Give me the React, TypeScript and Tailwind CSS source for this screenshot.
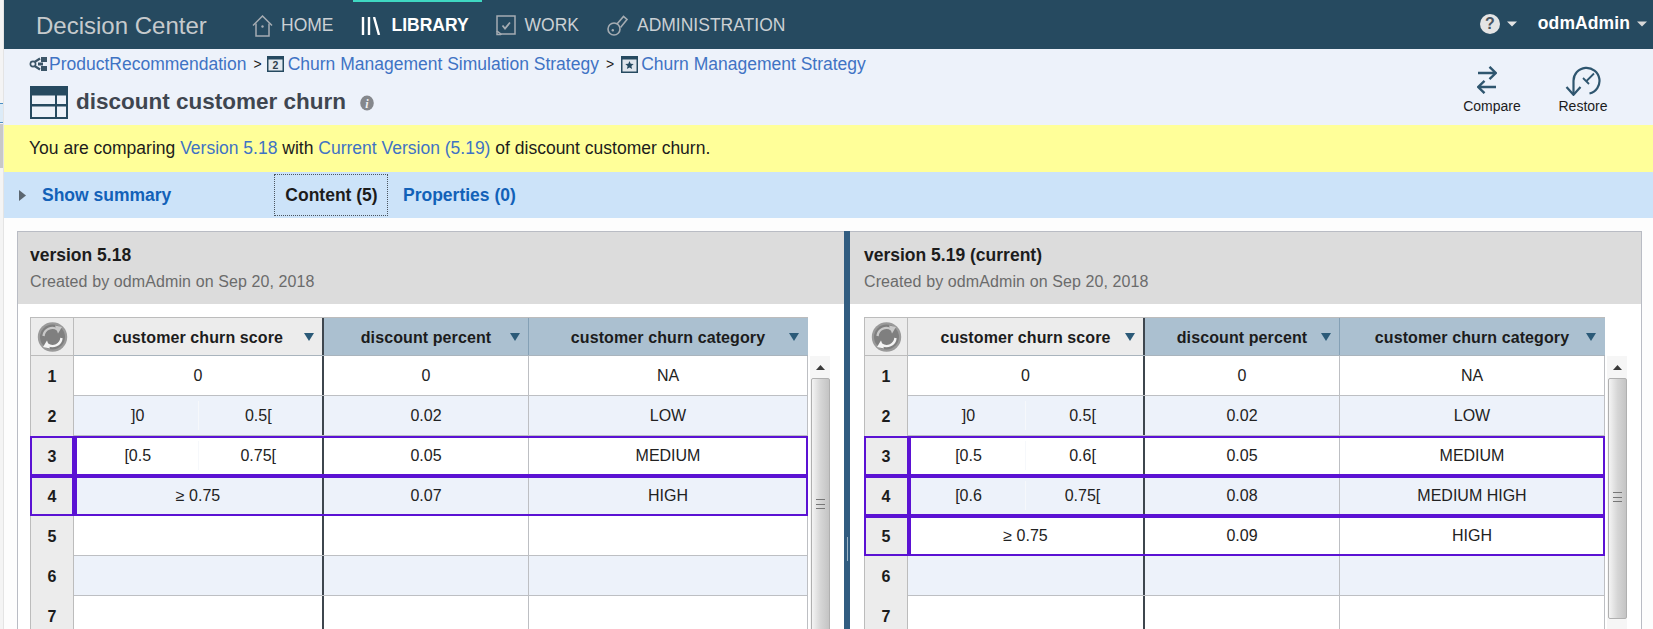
import React from "react";

const FONT = { fontFamily: '"Liberation Sans", Arial, sans-serif' };

function Caret({ className = "" }: { className?: string }) {
  return (
    <svg width="10" height="6" viewBox="0 0 10 6" className={className}>
      <path d="M0 0.5h10L5 5.5z" fill="currentColor" />
    </svg>
  );
}
function FilterCaret() {
  return (
    <svg width="10" height="8" viewBox="0 0 10 8" className="absolute right-[8px] top-[15px]">
      <path d="M0 0h10L5 8z" fill="#2b5a78" />
    </svg>
  );
}

function HomeIcon() {
  return (
    <svg width="21" height="22" viewBox="0 0 21 22" fill="none" stroke="#a5acb2" strokeWidth="1.5">
      <path d="M1 10.500L10.500 1 20 10.500" />
      <path d="M4 8.500V21h13V8.500" />
      <circle cx="10.500" cy="11.500" r="1.200" fill="#a5acb2" stroke="none" />
    </svg>
  );
}
function LibraryIcon() {
  return (
    <svg width="20" height="18" viewBox="0 0 20 18" fill="none" stroke="#ffffff" strokeWidth="2.400">
      <path d="M2 0v18M8 0v18M13 0l5 18" />
    </svg>
  );
}
function WorkIcon() {
  return (
    <svg width="20" height="21" viewBox="0 0 20 21" fill="none" stroke="#a5acb2" strokeWidth="1.500">
      <path d="M1 1h18v18H5l-4-3z" />
      <path d="M1 16v3.500h4V20" />
      <path d="M6.500 10.500l2.500 3 5-6" strokeWidth="1.800" />
    </svg>
  );
}
function KeyIcon() {
  return (
    <svg width="21" height="21" viewBox="0 0 21 21" fill="none" stroke="#a5acb2" strokeWidth="1.600">
      <circle cx="7" cy="14" r="6" />
      <circle cx="5.800" cy="15.200" r="1.200" fill="#a5acb2" stroke="none" />
      <path d="M10 9L16.500 1.500 20 4.500 13.500 12.500" />
    </svg>
  );
}

function ProjectIcon() {
  return (
    <svg width="19" height="15" viewBox="0 0 19 15">
      <path d="M11 1.500L2.500 7l8.500 5.500" fill="none" stroke="#3c5668" strokeWidth="2.200" />
      <circle cx="4" cy="7" r="2.600" fill="#edf2fa" stroke="#3c5668" strokeWidth="1.600" />
      <path d="M12 0h6v5h-6zM12 9h6v5h-6z" fill="#3c5668" />
      <path d="M9 5.500h5v3H9z" fill="#3c5668" />
    </svg>
  );
}
function CalendarIcon({ label }: { label: string }) {
  return (
    <svg width="17" height="16" viewBox="0 0 17 16" className="shrink-0">
      <rect x="0" y="0" width="17" height="16" fill="#264a60" />
      <rect x="1.500" y="3.500" width="14" height="11" fill="#e4e9ef" />
      <text x="8.500" y="13" fontSize="10.500" fontWeight="700" textAnchor="middle" fill="#2f3f4c" fontFamily="Liberation Sans">
        {label}
      </text>
    </svg>
  );
}
function StarIcon() {
  return (
    <svg width="17" height="17" viewBox="0 0 17 17" className="shrink-0">
      <rect x="0" y="0" width="17" height="17" fill="#264a60" />
      <rect x="1.500" y="3.500" width="14" height="12" fill="#dfe5ec" />
      <path d="M8.500 5l1.200 2.800 3 .2-2.300 2 .7 3-2.600-1.600-2.600 1.600.7-3-2.300-2 3-.2z" fill="#264a60" />
    </svg>
  );
}
function TableIcon() {
  return (
    <svg width="38" height="33" viewBox="0 0 38 33" className="shrink-0">
      <rect width="38" height="33" fill="#264a60" />
      <rect x="2" y="9.500" width="23" height="8.500" fill="#edf2fa" />
      <rect x="27" y="9.500" width="9" height="8.500" fill="#edf2fa" />
      <rect x="2" y="20.500" width="23" height="10.500" fill="#edf2fa" />
      <rect x="27" y="20.500" width="9" height="10.500" fill="#edf2fa" />
    </svg>
  );
}
function InfoIcon() {
  return (
    <svg width="14" height="16" viewBox="0 0 14 16">
      <ellipse cx="7" cy="8" rx="6.800" ry="7.500" fill="#85888c" />
      <text x="7" y="12.500" fontSize="12" fontWeight="700" fontStyle="italic" textAnchor="middle" fill="#f2f2f2" fontFamily="Liberation Serif">
        i
      </text>
    </svg>
  );
}
function CompareIcon() {
  return (
    <svg width="20" height="28" viewBox="0 0 20 28" fill="none" stroke="#2f566f" strokeWidth="2.400" className="mr-[10px]">
      <path d="M1 7h17.500M12.500 0.800L18.800 7l-6.300 6.200" />
      <path d="M19 21H1.500M7.500 14.800L1.200 21l6.300 6.200" />
    </svg>
  );
}
function RestoreIcon() {
  return (
    <svg width="36" height="30" viewBox="0 0 36 30" fill="none" stroke="#2f566f" strokeWidth="2.200">
      <path d="M8.500 28V15A13 13 0 1 1 24.500 27.500" />
      <path d="M1.500 21L8.500 28.800 15.500 21" />
      <path d="M29 7.500L21.500 15" strokeWidth="1.800" />
      <path d="M18 12l6 6" strokeWidth="1.800" />
    </svg>
  );
}
function RefreshIcon() {
  return (
    <svg width="31" height="30" viewBox="0 0 30 30" className="shrink-0">
      <circle cx="15" cy="15" r="14.700" fill="#9a9a9a" />
      <circle cx="15" cy="15" r="12.500" fill="#7f7f7f" />
      <path d="M6 14A9 9 0 0 1 20 7.500" fill="none" stroke="#c9c9c9" strokeWidth="2.400" />
      <path d="M17.500 3.500L24.500 5 20.500 11.500z" fill="#c9c9c9" />
      <path d="M24 16A9 9 0 0 1 10 22.500" fill="none" stroke="#f4f4f4" strokeWidth="2.400" />
      <path d="M12.500 26.500L5.500 25 9.500 18.500z" fill="#f4f4f4" />
    </svg>
  );
}

type Row = { a?: string; b?: string; one?: string; pct?: string; cat?: string; hl?: boolean };

function Head({ w, bg, label, divider }: { w: string; bg: string; label: string; divider: string }) {
  return (
    <div className={`relative flex items-center justify-center h-full pt-[3px] border-r ${w} ${bg} ${divider}`}>
      <span className="font-bold tracking-[0.1px] text-[#1c1c1c]">{label}</span>
      <FilterCaret />
    </div>
  );
}

function Grid({
  rows,
  numW,
  w1,
  w2,
  w3,
  total,
  hlNum,
  hlBody,
}: {
  rows: Row[];
  numW: string;
  w1: string;
  w2: string;
  w3: string;
  total: string;
  hlNum: string;
  hlBody: string;
}) {
  return (
    <div className={`shrink-0 ${total}`}>
      <div className="flex h-[39px] border-t border-[#bcbcbc] box-border">
        <div className={`flex items-center justify-center bg-[#ececec] border-x border-b border-[#bcbcbc] ${numW}`}>
          <RefreshIcon />
        </div>
        <div className="flex h-full border-b border-[#a9b4bd]">
          <Head w={w1} bg="bg-[#ececec]" label="customer churn score" divider="border-r-2 border-[#3e464e]" />
          <Head w={w2} bg="bg-[#abc0d0]" label="discount percent" divider="border-[#84a0b5]" />
          <Head w={w3} bg="bg-[#abc0d0]" label="customer churn category" divider="border-[#abc0d0]" />
        </div>
      </div>
      {rows.map((r, i) => {
        const alt = i % 2 === 1;
        return (
          <div key={i} className="relative flex h-10">
            <div className={`flex items-center justify-center bg-[#ececec] border-x border-[#bcbcbc] font-bold text-[#1c1c1c] pt-[2px] ${numW}`}>
              {i + 1}
            </div>
            <div className={`flex border-b border-[#bdbfc3] text-[#222222] ${alt ? "bg-[#edf2fa]" : "bg-white"}`}>
              <div className={`flex items-center justify-center border-r-2 border-[#3e464e] ${w1}`}>
                {r.a !== undefined ? (
                  <div className="flex w-full h-full py-[5px] px-[4px]">
                    <div className="flex-1 flex items-center justify-center border-r border-[#f6f8fb]">{r.a}</div>
                    <div className="flex-1 flex items-center justify-center">{r.b}</div>
                  </div>
                ) : (
                  r.one
                )}
              </div>
              <div className={`flex items-center justify-center border-r border-[#bdbfc3] ${w2}`}>{r.pct}</div>
              <div className={`flex items-center justify-center border-r border-[#bdbfc3] ${w3}`}>{r.cat}</div>
            </div>
            {r.hl && (
              <>
                <div className={`absolute left-0 top-0 h-full border-2 border-[#5b12d3] pointer-events-none ${hlNum}`} />
                <div className={`absolute right-0 top-0 h-full border-2 border-[#5b12d3] pointer-events-none ${hlBody}`} />
              </>
            )}
          </div>
        );
      })}
    </div>
  );
}

function Scrollbar({ thumb, grip }: { thumb: string; grip: string }) {
  return (
    <div className="w-5 shrink-0 mt-[39px] ml-[2px] bg-[#f6f6f6] flex flex-col items-center">
      <div className="h-[22px] shrink-0 flex items-center justify-center">
        <svg width="9" height="5" viewBox="0 0 9 5">
          <path d="M0 5L4.500 0 9 5z" fill="#3a3a3a" />
        </svg>
      </div>
      <div className={`w-[19px] shrink-0 flex flex-col items-center rounded-[2px] border border-[#b0b0b0] bg-gradient-to-r from-[#f4f4f4] via-[#d6d6d6] to-[#c4c4c4] ${thumb}`}>
        <div className={`w-[9px] h-[10px] border-y border-[#777777] flex items-center ${grip}`}>
          <div className="w-full h-px bg-[#777777]" />
        </div>
      </div>
    </div>
  );
}

function Panel({
  title,
  className,
  pad,
  children,
}: {
  title: string;
  className: string;
  pad: string;
  children: React.ReactNode;
}) {
  return (
    <div className={`shrink-0 flex flex-col border-t border-[#b9bcc4] bg-white h-[398px] overflow-hidden ${className}`}>
      <div className={`h-[72px] shrink-0 bg-[#dcdcdc] pt-[11px] ${pad}`}>
        <div className="font-bold text-[17.5px] text-[#1c1c1c] leading-[24px]">{title}</div>
        <div className="text-[#6b6b6b] leading-[24px] mt-[3px] tracking-[0.1px]">Created by odmAdmin on Sep 20, 2018</div>
      </div>
      <div className={`flex pt-[13px] ${pad}`}>{children}</div>
    </div>
  );
}

const leftRows: Row[] = [
  { one: "0", pct: "0", cat: "NA" },
  { a: "]0", b: "0.5[", pct: "0.02", cat: "LOW" },
  { a: "[0.5", b: "0.75[", pct: "0.05", cat: "MEDIUM", hl: true },
  { one: "≥ 0.75", pct: "0.07", cat: "HIGH", hl: true },
  {},
  {},
  {},
];
const rightRows: Row[] = [
  { one: "0", pct: "0", cat: "NA" },
  { a: "]0", b: "0.5[", pct: "0.02", cat: "LOW" },
  { a: "[0.5", b: "0.6[", pct: "0.05", cat: "MEDIUM", hl: true },
  { a: "[0.6", b: "0.75[", pct: "0.08", cat: "MEDIUM HIGH", hl: true },
  { one: "≥ 0.75", pct: "0.09", cat: "HIGH", hl: true },
  {},
  {},
];

export default function App() {
  return (
    <div style={FONT} className="flex w-[1653px] h-[629px] overflow-hidden bg-[#fdfdfd] text-[16px] text-[#1c1c1c]">
      <div className="w-1 shrink-0 flex flex-col bg-[#f4f4f4] border-r border-[#e4e4e4]">
        <div className="h-[103px]" />
        <div className="h-5 bg-[#dcebf7] border-y border-[#4b8fc4]" />
        <div className="h-[44px] mt-[1px] bg-[#c8c8c8]" />
      </div>
      <div className="flex-1 min-w-0 flex flex-col">
        <header className="h-[49px] shrink-0 pt-[2px] bg-[#264a60] flex items-center text-[17.5px] text-[#cbd0d4]">
          <div className="ml-[32px] w-[216px] text-[24px] text-[#c6cacd]">Decision Center</div>
          <div className="flex items-center gap-[8px]">
            <HomeIcon />
            <span>HOME</span>
          </div>
          <div className="relative ml-[19px] h-full w-[129px] pl-[8px] flex items-center gap-[11px] text-white font-bold">
            <div className="absolute left-0 top-[-2px] w-full h-[2px] bg-[#3fd8c2]" />
            <LibraryIcon />
            <span>LIBRARY</span>
          </div>
          <div className="ml-[14px] flex items-center gap-[9px]">
            <WorkIcon />
            <span>WORK</span>
          </div>
          <div className="ml-[28px] flex items-center gap-[9px]">
            <KeyIcon />
            <span>ADMINISTRATION</span>
          </div>
          <div className="ml-auto flex items-center text-white -mt-[4px]">
            <div className="w-5 h-5 rounded-full bg-[#e4e4e4] text-[#4a5560] font-bold text-[16px] flex items-center justify-center">?</div>
            <Caret className="ml-[7px] text-[#e4e4e4]" />
            <span className="ml-[21px] font-bold tracking-[0.1px]">odmAdmin</span>
            <Caret className="ml-[7px] mr-[6px] text-[#d8d8d8]" />
          </div>
        </header>

        <div className="h-[76px] shrink-0 bg-[#edf2fa] flex justify-between">
          <div className="pl-[25px] pt-[5px]">
            <div className="flex items-center h-[20px] text-[17.5px] text-[#3f73c4]">
              <ProjectIcon />
              <span className="ml-[1px]">ProductRecommendation</span>
              <span className="ml-[7px] mr-[5px] text-[14px] text-[#1c1c1c]">&gt;</span>
              <CalendarIcon label="2" />
              <span className="ml-[4px]">Churn Management Simulation Strategy</span>
              <span className="ml-[7px] mr-[7px] text-[14px] text-[#1c1c1c]">&gt;</span>
              <StarIcon />
              <span className="ml-[3px]">Churn Management Strategy</span>
            </div>
            <div className="flex items-center mt-[11px] pl-[1px]">
              <TableIcon />
              <span className="ml-[8px] text-[22.5px] leading-[33px] pb-[2px] font-bold text-[#3f4650]">discount customer churn</span>
              <span className="ml-[14px]"><InfoIcon /></span>
            </div>
          </div>
          <div className="flex pt-[17px] pr-[45px] text-[14px] text-[#1c1c1c]">
            <div className="flex flex-col items-center w-[58px]">
              <CompareIcon />
              <span className="leading-[16px] mt-[4px]">Compare</span>
            </div>
            <div className="flex flex-col items-center w-[50px] ml-[37px]">
              <RestoreIcon />
              <span className="leading-[16px] mt-[2px]">Restore</span>
            </div>
          </div>
        </div>

        <div className="h-[47px] shrink-0 bg-[#ffff99] flex items-center pl-[25px] text-[17.5px]">
          <div>
            You are comparing <span className="text-[#3f73c4]">Version 5.18</span> with{" "}
            <span className="text-[#3f73c4]">Current Version (5.19)</span> of discount customer churn.
          </div>
        </div>

        <div className="h-[46px] shrink-0 bg-[#cce3f9] flex items-center font-bold text-[17.5px]">
          <svg width="7" height="11" viewBox="0 0 7 11" className="ml-[15px]">
            <path d="M0 0l7 5.500-7 5.500z" fill="#5b6670" />
          </svg>
          <span className="ml-[16px] w-[232px] text-[#1261b8]">Show summary</span>
          <div className="h-[42px] w-[114px] pl-[1px] flex items-center justify-center border border-dotted border-[#4a5560] text-[#1c1c1c]">Content (5)</div>
          <span className="ml-[15px] text-[#1261b8]">Properties (0)</span>
        </div>

        <div className="flex pl-[13px] pt-[13px]">
          <Panel title="version 5.18" className="w-[827px] border-l" pad="pl-[12px]">
            <Grid
              rows={leftRows}
              total="w-[778px]"
              numW="w-[44px]"
              w1="w-[250px]"
              w2="w-[205px]"
              w3="w-[279px]"
              hlNum="w-[44px]"
              hlBody="w-[734px] border-l-[3px]"
            />
            <Scrollbar thumb="h-[300px]" grip="mt-[120px]" />
          </Panel>
          <div className="relative w-[6px] shrink-0 bg-[#315c80]">
            <div className="absolute left-[3px] top-[306px] h-6 w-px bg-[#9db4c6]" />
          </div>
          <Panel title="version 5.19 (current)" className="w-[792px] border-r" pad="pl-[14px]">
            <Grid
              rows={rightRows}
              total="w-[741px]"
              numW="w-[44px]"
              w1="w-[237px]"
              w2="w-[195px]"
              w3="w-[265px]"
              hlNum="w-[45px]"
              hlBody="w-[696px]"
            />
            <Scrollbar thumb="h-[241px]" grip="mt-[113px]" />
          </Panel>
        </div>
      </div>
    </div>
  );
}
